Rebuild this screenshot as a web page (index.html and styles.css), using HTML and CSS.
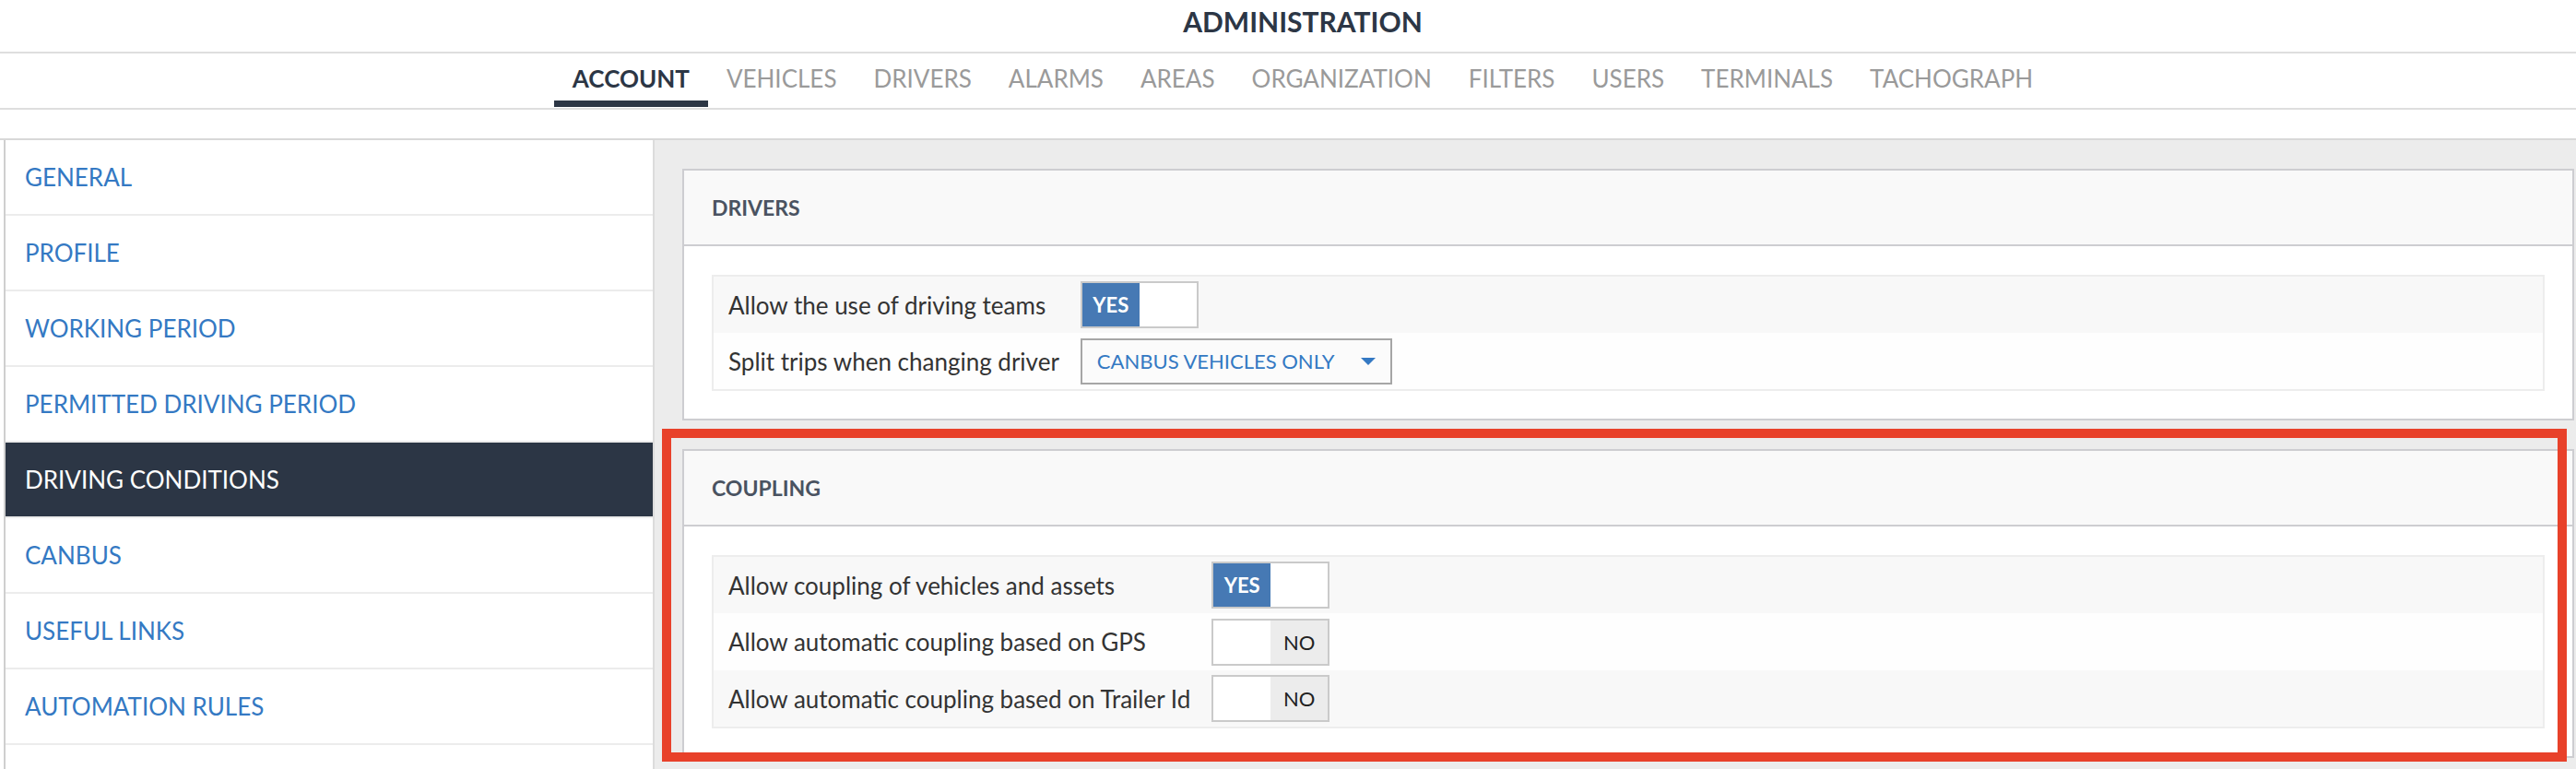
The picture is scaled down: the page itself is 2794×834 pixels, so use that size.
FILE: index.html
```html
<!DOCTYPE html>
<html>
<head>
<meta charset="utf-8">
<link rel="stylesheet" href="styles.css">
</head>
<body>
<header class="top">
  <div class="title">ADMINISTRATION</div>
  <nav class="tabs">
    <a class="tab active">ACCOUNT</a>
    <a class="tab">VEHICLES</a>
    <a class="tab">DRIVERS</a>
    <a class="tab">ALARMS</a>
    <a class="tab">AREAS</a>
    <a class="tab">ORGANIZATION</a>
    <a class="tab">FILTERS</a>
    <a class="tab">USERS</a>
    <a class="tab">TERMINALS</a>
    <a class="tab">TACHOGRAPH</a>
  </nav>
</header>
<main class="main">
  <aside class="sidebar">
    <a class="side-item">GENERAL</a>
    <a class="side-item">PROFILE</a>
    <a class="side-item">WORKING PERIOD</a>
    <a class="side-item">PERMITTED DRIVING PERIOD</a>
    <a class="side-item selected">DRIVING CONDITIONS</a>
    <a class="side-item">CANBUS</a>
    <a class="side-item">USEFUL LINKS</a>
    <a class="side-item">AUTOMATION RULES</a>
    <a class="side-item"></a>
  </aside>
  <section class="content">
    <div class="panel">
      <div class="panel-head">DRIVERS</div>
      <div class="panel-body">
        <table class="settings">
          <tr>
            <td class="label">Allow the use of driving teams</td>
            <td class="control">
              <span class="switch"><span class="sw-on">YES</span><span class="sw-blank"></span></span>
            </td>
          </tr>
          <tr>
            <td class="label">Split trips when changing driver</td>
            <td class="control">
              <span class="select"><span class="select-text">CANBUS VEHICLES ONLY</span><svg class="caret" width="16" height="8" viewBox="0 0 16 8"><path d="M0 0 L16 0 L8 8 Z" fill="#3479c3"/></svg></span>
            </td>
          </tr>
        </table>
      </div>
    </div>
    <div class="panel highlighted">
      <div class="panel-head">COUPLING</div>
      <div class="panel-body">
        <table class="settings">
          <tr>
            <td class="label">Allow coupling of vehicles and assets</td>
            <td class="control">
              <span class="switch"><span class="sw-on">YES</span><span class="sw-blank"></span></span>
            </td>
          </tr>
          <tr>
            <td class="label">Allow automatic coupling based on GPS</td>
            <td class="control">
              <span class="switch"><span class="sw-blank"></span><span class="sw-off">NO</span></span>
            </td>
          </tr>
          <tr>
            <td class="label">Allow automatic coupling based on Trailer Id</td>
            <td class="control">
              <span class="switch"><span class="sw-blank"></span><span class="sw-off">NO</span></span>
            </td>
          </tr>
        </table>
      </div>
      <div class="annotation"></div>
    </div>
  </section>
</main>
</body>
</html>
```

FILE: styles.css
```css
* { box-sizing: border-box; }

html, body {
  margin: 0;
  padding: 0;
  background: #fff;
}

body {
  width: 2794px;
  height: 834px;
  overflow: hidden;
  font-family: Lato, "Open Sans", "Liberation Sans", sans-serif;
  color: #333;
}

.title {
  height: 58px;
  display: flex;
  align-items: center;
  justify-content: center;
  font-size: 30px;
  font-weight: 700;
  color: #2c3645;
  border-bottom: 2px solid #dedede;
  padding-left: 32px;
  padding-bottom: 10px;
}

.tabs {
  height: 61px;
  display: flex;
  justify-content: center;
  border-bottom: 2px solid #dedede;
  padding-left: 32px;
}

.tab {
  display: flex;
  align-items: center;
  padding: 2px 20px 0 20px;
  font-size: 26px;
  color: #9a9a9a;
  border-bottom: 7px solid transparent;
  margin-bottom: 1px;
}

.tab.active {
  color: #2c3645;
  font-weight: 700;
  border-bottom-color: #2c3645;
}

.main {
  margin-top: 31px;
  height: 684px;
  display: flex;
  border-top: 2px solid #d8d8d8;
  overflow: hidden;
}

.sidebar {
  margin-left: 4px;
  width: 706px;
  flex: none;
  border-left: 2px solid #cfcfcf;
  border-right: 2px solid #dcdcdc;
  display: flex;
  flex-direction: column;
  overflow: hidden;
}

.side-item {
  height: 82px;
  flex: none;
  display: flex;
  align-items: center;
  padding-left: 21px;
  font-size: 26px;
  color: #3479c3;
  border-bottom: 2px solid #ececec;
}

.side-item.selected {
  background: #2c3645;
  color: #fff;
}

.content {
  flex: 1;
  background: #ececec;
  padding: 31px 2px 0 30px;
  overflow: hidden;
}

.panel {
  position: relative;
  background: #fff;
  border: 2px solid #cdcdd1;
  margin-bottom: 31px;
}

.panel.highlighted {
  margin-bottom: 12px;
}

.panel-head {
  height: 82px;
  display: flex;
  align-items: center;
  padding: 0 30px;
  background: #f9f9f9;
  border-bottom: 2px solid #cdcdd1;
  font-size: 23px;
  font-weight: 700;
  color: #4a5361;
}

.panel-body {
  padding: 31px 30px 30px 30px;
}

.settings {
  width: 100%;
  border-collapse: collapse;
  border: 2px solid #ededed;
}

.settings tr:nth-child(odd) {
  background: #f8f8f8;
}

.settings tr:nth-child(even) {
  background: #fefefe;
}

.settings td {
  padding: 5px 16px;
  vertical-align: middle;
  height: 62px;
}

.settings .label {
  white-space: nowrap;
  font-size: 26px;
  color: #333;
}

.settings .control {
  width: 100%;
  padding-left: 7px;
}

.switch {
  display: inline-flex;
  vertical-align: middle;
  height: 51px;
  border: 2px solid #cacaca;
  background: #fff;
}

.sw-on, .sw-off, .sw-blank {
  width: 62px;
  display: flex;
  align-items: center;
  justify-content: center;
  font-size: 22px;
}

.sw-on {
  background: #4679b4;
  color: #fff;
  font-weight: 700;
}

.sw-off {
  background: #ececec;
  color: #222;
}

.select {
  display: inline-flex;
  align-items: center;
  justify-content: space-between;
  vertical-align: middle;
  width: 338px;
  height: 50px;
  border: 2px solid #a6a6a6;
  background: #fbfbfb;
  padding: 0 16px;
}

.select-text {
  font-size: 22px;
  color: #3479c3;
}

.caret {
  display: block;
}

.annotation {
  position: absolute;
  left: -24px;
  top: -24px;
  right: 6px;
  bottom: -6px;
  border: 10px solid #e8412a;
  pointer-events: none;
}
```
